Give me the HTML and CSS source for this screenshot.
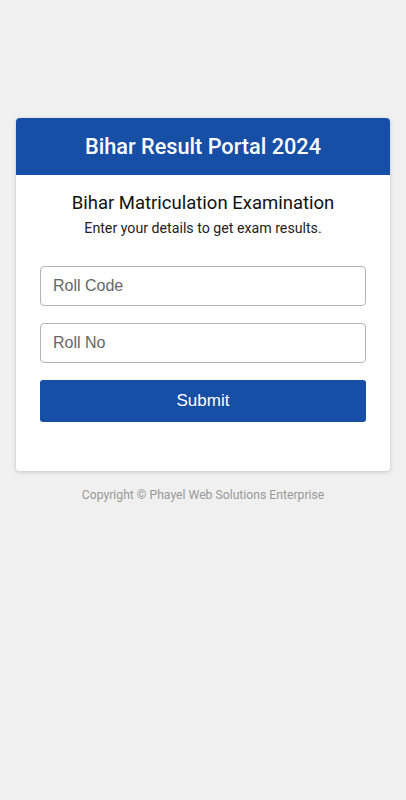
FILE: index.html
```html
<!DOCTYPE html>
<html lang="en">
<head>
  <meta charset="UTF-8" />
  <meta name="viewport" content="width=device-width, initial-scale=1.0"/>
  <title>Bihar Result Portal 2024</title>
  <link rel="stylesheet" href="styles.css">
</head>
<body>
  <div class="container">
    <div class="header">
      <h1>Bihar Result Portal 2024</h1>
    </div>
    <div class="content">
      <h2>Bihar Matriculation Examination</h2>
      <p class="subtitle">Enter your details to get exam results.</p>
      <form class="result-form" onsubmit="return false;">
        <input type="text" id="rollCode" placeholder="Roll Code" />
        <input type="text" id="rollNo" placeholder="Roll No" />
        <button type="submit">Submit</button>
      </form>
    </div>
  </div>
  <p class="footer">Copyright &copy; Phayel Web Solutions Enterprise</p>
</body>
</html>
```

FILE: styles.css
```css
body {
  font-family: Roboto, "Noto Sans", sans-serif;
  margin: 0;
  padding: 118px 16px 0;
  background: #f0f0f0;
}
.container {
  background: #fff;
  border-radius: 4px;
  box-shadow: 0 1px 4px rgba(0,0,0,0.18);
  overflow: hidden;
}
.header {
  background: #174ea6;
  height: 57px;
  display: flex;
  align-items: center;
  justify-content: center;
}
.header h1 {
  margin: 0;
  color: #fff;
  font-size: 21.7px;
  font-weight: 500;
}
.content {
  padding: 15px 24px 49px;
  text-align: center;
}
.content h2 {
  margin: 0;
  font-size: 18.5px;
  font-weight: 400;
  color: #111;
  line-height: 26px;
}
.subtitle {
  margin: 2px 0 0;
  font-size: 14.2px;
  color: #222;
  line-height: 20px;
}
.result-form {
  margin-top: 28px;
  display: flex;
  flex-direction: column;
}
input[type="text"] {
  height: 40px;
  padding: 0 12px;
  margin-bottom: 17px;
  border: 1px solid #b5b5b5;
  border-radius: 4px;
  font-family: "Liberation Sans", Arial, sans-serif;
  font-size: 16px;
  box-sizing: border-box;
}
input::placeholder {
  color: #666;
}
button {
  height: 42px;
  background: #174ea6;
  color: #fff;
  border: none;
  border-radius: 3px;
  font-family: "Liberation Sans", Arial, sans-serif;
  font-size: 17px;
  cursor: pointer;
}
.footer {
  margin: 17px 0 0;
  text-align: center;
  font-size: 12.2px;
  color: #999;
}
```
